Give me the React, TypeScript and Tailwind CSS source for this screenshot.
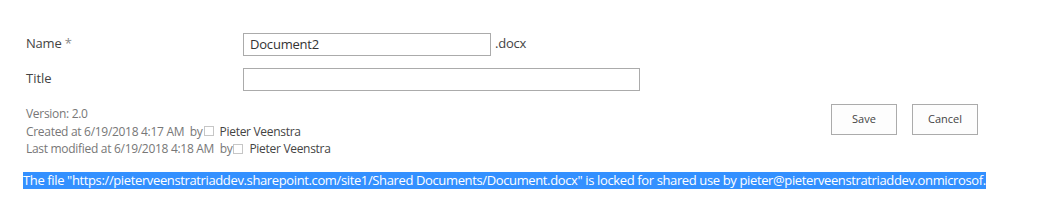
export default function App() {
  return (
    <div className="w-[1039px] h-[224px] bg-white text-[#444] font-['Open_Sans',sans-serif] relative overflow-hidden">
      <div className="pl-[26px] pt-[33px]">
        <div className="flex items-start h-[23px]">
          <div className="w-[217px] text-[13px] leading-[20px] tracking-[-0.2px]">
            Name <span className="text-[#888]">*</span>
          </div>
          <div className="w-[248px] h-[23px] border border-[#ababab] px-[6px] text-[13px] leading-[21px] text-[#333] tracking-[-0.2px]">
            Document2
          </div>
          <div className="ml-[4px] text-[13px] leading-[20px] tracking-[-0.2px]">.docx</div>
        </div>
        <div className="flex items-start h-[23px] mt-[12px]">
          <div className="w-[217px] text-[13px] leading-[20px]">Title</div>
          <div className="w-[397px] h-[23px] border border-[#ababab]"></div>
        </div>
        <div className="flex mt-[14px]">
          <div className="text-[12px] leading-[17.5px] text-[#777] tracking-[-0.3px]">
            <div>Version: 2.0</div>
            <div className="flex items-center whitespace-pre">
              {"Created at 6/19/2018 4:17 AM  by"}
              <span className="inline-block w-[10px] h-[10px] border border-[#c6c6c6] ml-[1px] mr-[6px]"></span>
              <span className="text-[#444]">Pieter Veenstra</span>
            </div>
            <div className="flex items-center whitespace-pre">
              {"Last modified at 6/19/2018 4:18 AM  by"}
              <span className="inline-block w-[10px] h-[10px] border border-[#c6c6c6] ml-[1px] mr-[6px]"></span>
              <span className="text-[#444]">Pieter Veenstra</span>
            </div>
          </div>
          <div className="ml-auto mr-[61px] flex gap-[15px] mt-[-1px]">
            <button className="w-[66px] h-[31px] border border-[#ababab] bg-[#fdfdfd] text-[11px] text-[#444]">Save</button>
            <button className="w-[66px] h-[31px] border border-[#ababab] bg-[#fdfdfd] text-[11px] text-[#444]">Cancel</button>
          </div>
        </div>
      </div>
      <div className="pl-[23px] mt-[9px]">
        <span className="bg-[#3390ff] text-white text-[13px] leading-[17px] tracking-[-0.37px] whitespace-nowrap inline-block">
          The file "https://pieterveenstratriaddev.sharepoint.com/site1/Shared Documents/Document.docx" is locked for shared use by pieter@pieterveenstratriaddev.onmicrosof.
        </span>
      </div>
    </div>
  );
}
